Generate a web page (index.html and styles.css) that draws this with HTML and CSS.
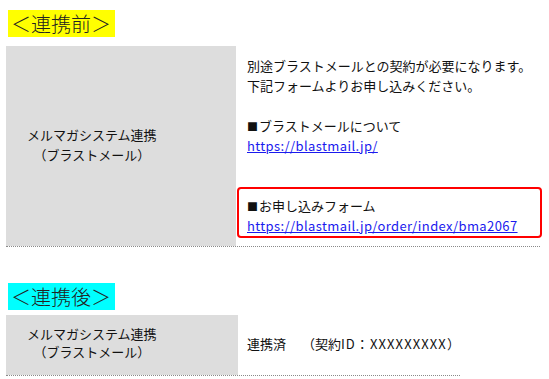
FILE: index.html
```html
<!DOCTYPE html>
<html lang="ja">
<head>
<meta charset="utf-8">
<link rel="stylesheet" href="styles.css">
</head>
<body>
<div class="page">
  <div class="heading heading-before"><span class="label label-yellow">＜連携前＞</span></div>
  <div class="table table-before">
    <div class="cell-head"><div class="head-text">メルマガシステム連携<br>（ブラストメール）</div></div>
    <div class="cell-body">
      <p class="line">別途ブラストメールとの契約が必要になります。</p>
      <p class="line">下記フォームよりお申し込みください。</p>
      <p class="line blank">&nbsp;</p>
      <p class="line"><span class="sq">■</span>ブラストメールについて</p>
      <p class="line"><a href="#">https://blastmail.jp/</a></p>
      <p class="line blank">&nbsp;</p>
      <div class="highlight">
        <p class="line"><span class="sq">■</span>お申し込みフォーム</p>
        <p class="line"><a href="#">https://blastmail.jp/order/index/bma2067</a></p>
      </div>
    </div>
  </div>

  <div class="heading heading-after"><span class="label label-cyan">＜連携後＞</span></div>
  <div class="table table-after">
    <div class="cell-head"><div class="head-text tight">メルマガシステム連携<br>（ブラストメール）</div></div>
    <div class="cell-body center">
      <p class="line">連携済　 （契約<span class="id">ID：XXXXXXXXX</span>）</p>
    </div>
  </div>
</div>
</body>
</html>
```

FILE: styles.css
```css
* { box-sizing: border-box; }
html, body { margin: 0; padding: 0; background: #fff; }
body {
  font-family: "Noto Sans CJK JP", "Noto Sans", sans-serif;
  font-size: 13px;
  color: #111;
}
.page { padding: 10px 0 0 6px; }

.heading { padding-left: 2px; }
.label {
  display: inline-block;
  font-size: 20px;
  font-weight: 300;
  line-height: 27px;
  height: 27px;
  padding: 0 4px 0 3px;
  color: #222;
}
.label-yellow { background: #ffff00; }
.label-cyan { background: #00ffff; }
.heading-before { margin-bottom: 9px; }
.heading-after { margin-top: 36px; margin-bottom: 5px; }

.table {
  display: grid;
  border-bottom: 1px dotted #8a8a8a;
}
.table-before { width: 534px; grid-template-columns: 230px 1fr; }
.table-after { width: 454px; grid-template-columns: 232px 1fr; height: 61px; }

.cell-head {
  background: #dddddd;
  display: flex;
  align-items: center;
  padding-left: 21px;
}
.head-text { text-align: center; line-height: 20px; padding-bottom: 2px; }
.head-text.tight { line-height: 18px; padding-bottom: 4px; }

.cell-body { padding: 10px 0 8px 11px; }
.cell-body.center { display: flex; align-items: center; padding: 0 0 3px 9px; }
.line { margin: 0; line-height: 20px; white-space: nowrap; }
.blank { height: 20px; }
.sq { font-size: 11px; display: inline-block; width: 12px; }
.id { letter-spacing: 1.1px; }

a { color: #1a1aee; text-decoration: underline; letter-spacing: 0.4px; }

.highlight {
  margin: 11px -2px 0 -10px;
  border: 2px solid #ff0000;
  border-radius: 4px;
  padding: 7px 0 0 8px;
}
```
